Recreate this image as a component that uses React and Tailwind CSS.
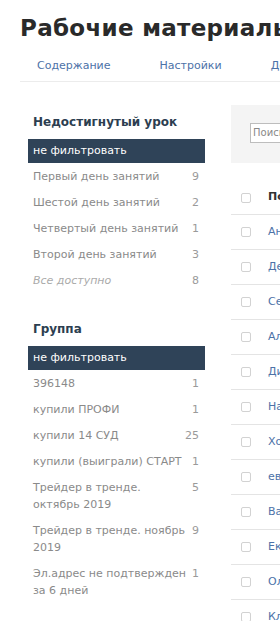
import React from "react";

const lessons = [
  { label: "Первый день занятий", count: 9 },
  { label: "Шестой день занятий", count: 2 },
  { label: "Четвертый день занятий", count: 1 },
  { label: "Второй день занятий", count: 3 },
  { label: "Все доступно", count: 8, muted: true },
];

const groups = [
  { label: "396148", count: 1 },
  { label: "купили ПРОФИ", count: 1 },
  { label: "купили 14 СУД", count: 25 },
  { label: "купили (выиграли) СТАРТ", count: 1 },
  { label: "Трейдер в тренде.\nоктябрь 2019", count: 5 },
  { label: "Трейдер в тренде. ноябрь\n2019", count: 9 },
  { label: "Эл.адрес не подтвержден\nза 6 дней", count: 1 },
];

const users = [
  "Анна", "Денис", "Сергей", "Алексей", "Диана", "Наталья",
  "Хорошев", "евгений", "Василий", "Екатерина", "Ольга", "Клим",
];

function FilterBlock({ title, items }) {
  return (
    <div>
      <h3 className="pl-[5px] h-[20px] leading-[20px] text-[12px] font-bold text-[#2c3e50]">{title}</h3>
      <div className="mt-[7px] h-[24px] bg-[#2f4358] pl-[5px] leading-[24px] text-[11px] text-white">
        не фильтровать
      </div>
      {items.map((it) => (
        <div key={it.label} className="flex items-start justify-between pl-[5px] pr-[6px] py-[4.5px] text-[11px] leading-[17px]">
          <span className={`whitespace-pre-line ${it.muted ? "italic text-[#aaa]" : "text-[#8a8a8a]"}`}>
            {it.label}
          </span>
          <span className="text-[#9a9a9a]">{it.count}</span>
        </div>
      ))}
    </div>
  );
}

export default function App() {
  return (
    <div className="w-[280px] h-[621px] overflow-hidden bg-white font-['DejaVu_Sans',sans-serif]">
      <div className="w-[700px] pl-[20px]">
        {/* HEADER */}
        <h1 className="pt-[12px] text-[23px] leading-[32px] tracking-[0.3px] font-bold text-[#2a2a2a] whitespace-nowrap">
          Рабочие материалы
        </h1>

        {/* TABS */}
        <div className="mt-[15px] flex gap-[49px] pl-[17px] pb-[8px] border-b border-[#ececec] text-[11px] leading-[14px] text-[#4d72a8]">
          <span>Содержание</span>
          <span>Настройки</span>
          <span>Доступ</span>
          <span>Статистика</span>
        </div>

        <div className="flex">
          {/* SIDEBAR */}
          <div className="ml-[8px] w-[177px] pt-[30px]">
            <FilterBlock title="Недостигнутый урок" items={lessons} />
            <div className="mt-[26px]">
              <FilterBlock title="Группа" items={groups} />
            </div>
          </div>

          {/* MAIN */}
          <div className="ml-[26px] flex-1 pt-[23px]">
            <div className="h-[58px] bg-[#f4f4f4] pl-[19px] pt-[18px]">
              <div className="w-[150px] h-[20px] border border-[#bdbdbd] bg-white pl-[2px] text-[10px] leading-[18px] text-[#888]">
                Поиск
              </div>
            </div>

            <div className="mt-[18px]">
              <div className="flex items-center h-[34px] pl-[10px] border-b border-[#e4e4e4]">
                <span className="w-[10px] h-[10px] border border-[#d2d2d2] rounded-[2px]" />
                <span className="ml-[17px] text-[11px] font-bold text-[#333]">Пользователь</span>
              </div>
              {users.map((u) => (
                <div key={u} className="flex items-center h-[35px] pl-[10px] border-b border-[#e4e4e4]">
                  <span className="w-[10px] h-[10px] border border-[#d2d2d2] rounded-[2px]" />
                  <span className="ml-[17px] text-[11px] text-[#4d72a8]">{u}</span>
                </div>
              ))}
            </div>
          </div>
        </div>
      </div>
    </div>
  );
}
